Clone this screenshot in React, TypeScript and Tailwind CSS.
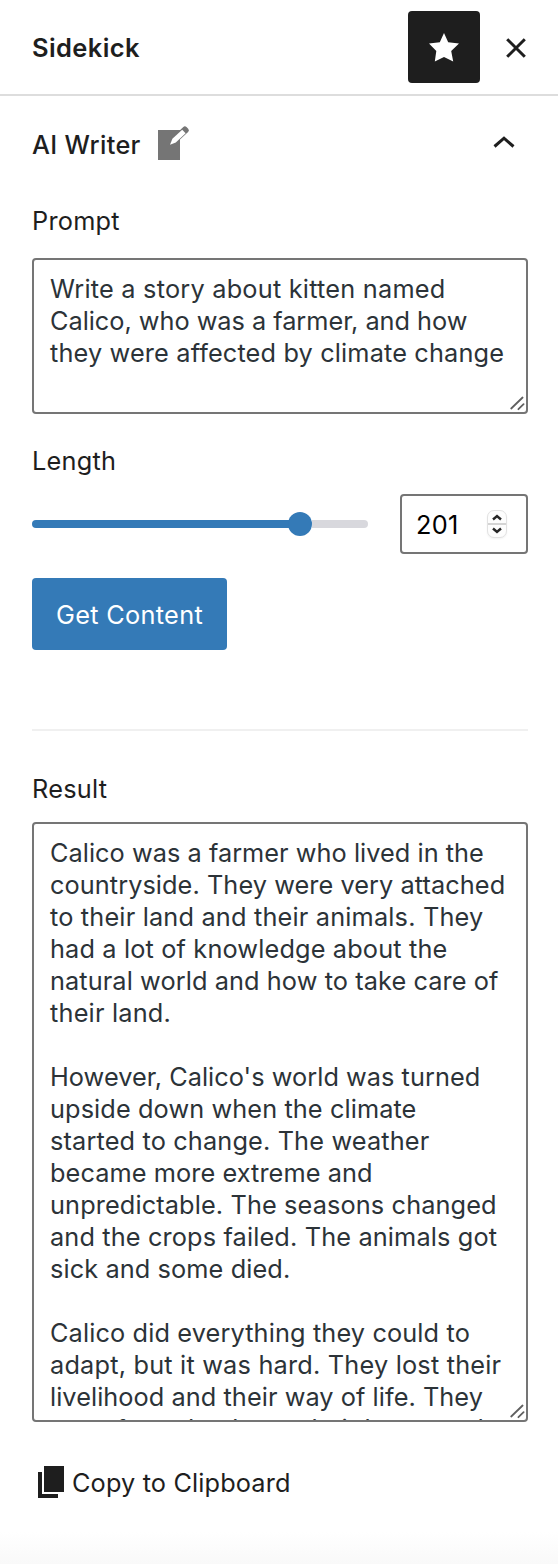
import type { ReactNode } from "react";

type Line = { text: string; tracking: string };

const promptLines: Line[] = [
  { text: "Write a story about kitten named", tracking: "tracking-[0.22px]" },
  { text: "Calico, who was a farmer, and how", tracking: "tracking-[-0.02px]" },
  { text: "they were affected by climate change", tracking: "tracking-[0.15px]" },
];

const resultLines: Line[] = [
  { text: "Calico was a farmer who lived in the", tracking: "tracking-[0.04px]" },
  { text: "countryside. They were very attached", tracking: "tracking-[0.07px]" },
  { text: "to their land and their animals. They", tracking: "tracking-[0.18px]" },
  { text: "had a lot of knowledge about the", tracking: "tracking-[0.15px]" },
  { text: "natural world and how to take care of", tracking: "tracking-[0.09px]" },
  { text: "their land.", tracking: "tracking-[0.2px]" },
  { text: "", tracking: "" },
  { text: "However, Calico's world was turned", tracking: "tracking-[0.04px]" },
  { text: "upside down when the climate", tracking: "tracking-[0.1px]" },
  { text: "started to change. The weather", tracking: "tracking-[0.15px]" },
  { text: "became more extreme and", tracking: "tracking-[0.08px]" },
  { text: "unpredictable. The seasons changed", tracking: "tracking-[0.12px]" },
  { text: "and the crops failed. The animals got", tracking: "tracking-[0.14px]" },
  { text: "sick and some died.", tracking: "tracking-[0.1px]" },
  { text: "", tracking: "" },
  { text: "Calico did everything they could to", tracking: "tracking-[0.13px]" },
  { text: "adapt, but it was hard. They lost their", tracking: "tracking-[0.2px]" },
  { text: "livelihood and their way of life. They", tracking: "tracking-[0.06px]" },
  { text: "were forced to leave their home and", tracking: "tracking-[0.08px]" },
];

function Label({ children }: { children: ReactNode }) {
  return <div className="h-8 whitespace-nowrap leading-8 tracking-[0.25px]">{children}</div>;
}

function TextBox({ lines, className }: { lines: Line[]; className: string }) {
  return (
    <div
      className={`relative overflow-hidden rounded-[4px] border-2 border-[#757575] pl-4 text-[#2c3338] ${className}`}
    >
      {lines.map((line, i) => (
        <div key={i} className={`h-8 whitespace-nowrap leading-8 ${line.tracking}`}>
          {line.text}
        </div>
      ))}
      <svg
        className="absolute right-0 bottom-0"
        width="18"
        height="18"
        viewBox="0 0 18 18"
        fill="none"
        stroke="#606060"
        strokeWidth="1.8"
        strokeLinecap="round"
      >
        <path d="M3.2 14.5 14.6 3.5M10.4 15.2 15.6 10.2" />
      </svg>
    </div>
  );
}

export default function App() {
  return (
    <div className="flex h-[1564px] w-[558px] flex-col bg-white font-['Inter','Liberation_Sans',sans-serif] text-[25.3px] text-[#1e1e1e]">
      <header className="flex h-24 shrink-0 items-center border-b-2 border-[#dddddd] pl-8">
        <div className="flex-1 pt-[2px] text-[25.5px] font-semibold leading-8 tracking-[0.4px]">Sidekick</div>
        <button className="flex size-[72px] items-center justify-center rounded-[4px] bg-[#1e1e1e]" aria-label="Pin">
          <svg width="30" height="29" viewBox="0 0 30 29" fill="#fff">
            <path d="M15 0 19.2 9.2 30 10.6 22.2 18 24.2 28.6 15 24 5.8 28.6 7.3 18 0 10.6 10.8 9.2Z" />
          </svg>
        </button>
        <button className="mr-[6px] flex size-[72px] items-center justify-center pt-[2px]" aria-label="Close">
          <svg width="20" height="20" viewBox="0 0 20 20" stroke="#1e1e1e" strokeWidth="3">
            <path d="M1.2 1.2 18.8 18.8M18.8 1.2 1.2 18.8" />
          </svg>
        </button>
      </header>

      <main className="flex flex-col pr-[30px] pl-8">
        <div className="flex h-[98px] items-center">
          <div className="w-[126px] whitespace-nowrap pb-px text-[25.3px] font-medium tracking-[0.35px]">AI Writer</div>
          <svg className="mb-[5px]" width="32" height="36" viewBox="0 0 32 36">
            <path d="M0 5H22V35H0Z" fill="#757575" />
            <path
              d="M11.2 20.8 13.6 13.3 25.3 2.1Q26.8.4 28.5 2.1L30.2 3.7Q31.8 5.4 30.1 7L18.5 17.7Z"
              fill="#757575"
            />
            <path d="M12 19.8 14.4 13.8 24.2 4.7 27.6 8.2 17.8 17.4Z" fill="#fff" />
          </svg>
          <svg
            className="mr-3 mb-[9px] ml-auto"
            width="24"
            height="14"
            viewBox="0 0 24 14"
            fill="none"
            stroke="#1e1e1e"
            strokeWidth="3"
          >
            <path d="M2.5 12.5 12 4.2 21.5 12.5" />
          </svg>
        </div>

        <div className="mt-[11px]">
          <Label>Prompt</Label>
        </div>
        <TextBox lines={promptLines} className="mt-[21px] h-[156px] pt-[13px]" />

        <div className="mt-[31px]">
          <Label>Length</Label>
        </div>
        <div className="mt-[17px] flex h-[60px] items-center gap-8">
          <div className="flex h-6 w-[336px] items-center">
            <div className="h-2 w-[268px] rounded-l-full bg-[#347ab7]" />
            <div className="-ml-3 size-6 rounded-full bg-[#347ab7]" />
            <div className="h-2 flex-1 rounded-r-full bg-[#d8d8dd]" />
          </div>
          <div className="flex h-[60px] w-32 items-center justify-between rounded-[4px] border-2 border-[#757575] pr-[19px] pl-[14px] text-black">
            <span className="pt-[2px] tracking-[0.3px]">201</span>
            <div className="flex h-7 w-5 flex-col items-center justify-center rounded-[7px] border border-[#e2e2e2] bg-[#fdfdfd] shadow-xs">
              <svg width="18" height="26" viewBox="1 0 18 26" fill="none">
                <path d="M0 13H20" stroke="#d4d4d4" strokeWidth="2" />
                <path d="M6 8.5 10 5 14 8.5M6 17.5 10 21 14 17.5" stroke="#262626" strokeWidth="2.4" />
              </svg>
            </div>
          </div>
        </div>

        <button className="mt-6 h-[72px] w-[195px] rounded-[4px] bg-[#347ab7] pt-[2px] whitespace-nowrap text-white tracking-[0.3px]">
          Get Content
        </button>

        <div className="mt-[79px] h-[2px] bg-[#f0f0f0]" />

        <div className="mt-[42px]">
          <Label>Result</Label>
        </div>
        <TextBox lines={resultLines} className="mt-[17px] h-[600px] pt-[13px]" />

        <div className="mt-11 flex h-8 items-center pl-[6px]">
          <svg className="mr-2 h-8 w-[26px]" viewBox="0 0 26 32" fill="#1e1e1e">
            <path d="M6 0H26V26H6ZM0 6H4V28H20V32H0Z" />
          </svg>
          <span className="pt-[2px] whitespace-nowrap tracking-[0.14px]">Copy to Clipboard</span>
        </div>
      </main>
      <div className="mt-auto h-8 bg-linear-to-b from-white to-[#f9f9f9]" />
    </div>
  );
}
